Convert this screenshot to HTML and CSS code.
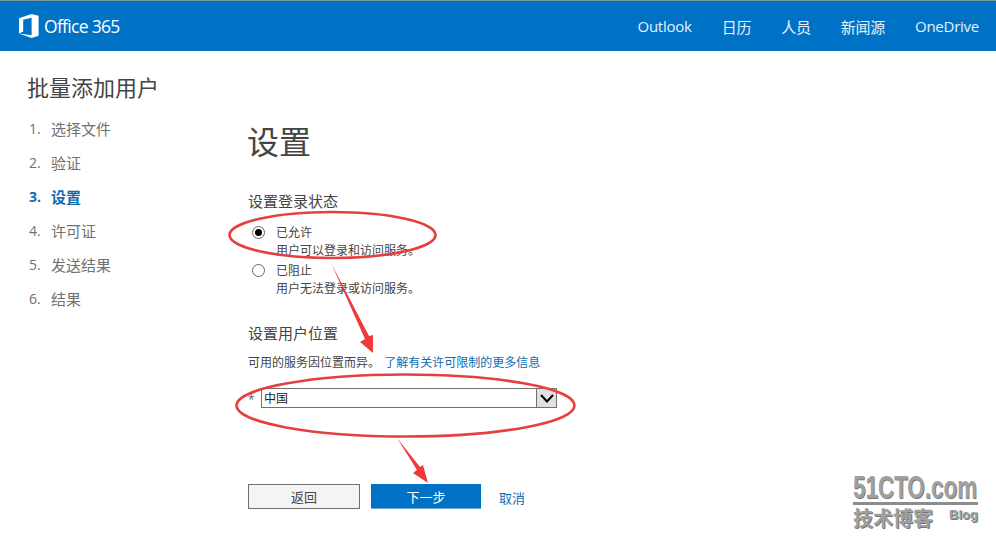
FILE: index.html
```html
<!DOCTYPE html>
<html lang="en">
<head>
  <meta charset="UTF-8">
  <title>批量添加用户</title>
  <link rel="stylesheet" href="styles.css">
</head>
<body>
  <div class="header">
    <div class="logo">
      <svg class="logo-icon" width="20" height="24" viewBox="0 0 20 24">
        <path fill="#fff" d="M0 4.2 12.6 0 19.6 1.8V21.8L12.6 24 0 19.6 12.6 21.2V3.8L4.2 5.8V17.6L0 19.6Z"/>
      </svg>
      <span class="logo-text">Office 365</span>
    </div>
    <div class="nav">
      <a>Outlook</a>
      <a>日历</a>
      <a>人员</a>
      <a>新闻源</a>
      <a>OneDrive</a>
    </div>
  </div>

  <div class="page">
    <div class="sidebar">
      <div class="page-title">批量添加用户</div>
      <ol class="steps">
        <li><span class="num">1.</span>选择文件</li>
        <li><span class="num">2.</span>验证</li>
        <li class="active"><span class="num">3.</span>设置</li>
        <li><span class="num">4.</span>许可证</li>
        <li><span class="num">5.</span>发送结果</li>
        <li><span class="num">6.</span>结果</li>
      </ol>
    </div>

    <div class="content">
      <h1>设置</h1>

      <div class="section-title">设置登录状态</div>
      <div class="radio-row">
        <span class="radio checked"></span>
        <div class="radio-text">
          <div>已允许</div>
          <div>用户可以登录和访问服务。</div>
        </div>
      </div>
      <div class="radio-row">
        <span class="radio"></span>
        <div class="radio-text">
          <div>已阻止</div>
          <div>用户无法登录或访问服务。</div>
        </div>
      </div>

      <div class="section-title location-title">设置用户位置</div>
      <div class="hint">可用的服务因位置而异。 <a class="link hint-link">了解有关许可限制的更多信息</a></div>

      <div class="select-row">
        <span class="star">*</span>
        <div class="select">
          <span class="select-value">中国</span>
          <span class="select-arrow">
            <svg width="14" height="9" viewBox="0 0 14 9"><path d="M1 1 7 7.5 13 1" fill="none" stroke="#000" stroke-width="2"/></svg>
          </span>
        </div>
      </div>

      <div class="buttons">
        <button class="btn">返回</button>
        <button class="btn primary">下一步</button>
        <a class="link cancel">取消</a>
      </div>
    </div>
  </div>

  <!-- red marks drawn on top of the screenshot -->
  <svg class="marks" width="996" height="546" viewBox="0 0 996 546">
    <ellipse cx="332.5" cy="235" rx="103" ry="23" fill="none" stroke="#e5403f" stroke-width="2.6"/>
    <ellipse cx="405.5" cy="405.5" rx="169" ry="31" fill="none" stroke="#e5403f" stroke-width="2.6"/>
    <path fill="#f0393a" d="M331 263 369 336 373 335 373 353 360 342 365 339Z"/>
    <path fill="#f0393a" d="M397 438 420 467 423 465 428 483 413 473 417 470Z"/>
  </svg>

  <div class="watermark">
    <div class="wm-site"><span class="wm-site-text">51CTO.com</span></div>
    <div class="wm-sub"><span class="wm-cn">技术博客</span><span class="wm-blog">Blog</span></div>
  </div>
</body>
</html>
```

FILE: styles.css
```css
body {
  margin: 0;
  width: 996px;
  height: 546px;
  overflow: hidden;
  position: relative;
  background-color: #fff;
  color: #444;
  font-family: "Open Sans", "Noto Sans CJK SC", sans-serif;
  font-size: 12px;
}

.header {
  height: 50px;
  border-top: 1px solid #7a9a9a;
  background-color: #0072c6;
  display: flex;
  justify-content: space-between;
  align-items: center;
  color: #fff;
}

.logo {
  display: flex;
  align-items: center;
  margin-left: 19px;
}

.logo-icon {
  margin-right: 5px;
}

.logo-text {
  font-size: 17.5px;
  letter-spacing: -0.7px;
}

.nav {
  display: flex;
  gap: 30px;
  margin-right: 17px;
  font-size: 15px;
  letter-spacing: -0.25px;
  color: #e3f1fb;
}

.page {
  display: flex;
}

.sidebar {
  width: 220px;
  padding-left: 28px;
  flex-shrink: 0;
}

.page-title {
  margin-top: 21px;
  margin-left: -1px;
  font-size: 22px;
  line-height: 30px;
  color: #444;
}

.steps {
  list-style: none;
  margin: 10px 0 0;
  padding: 0 0 0 1px;
  font-size: 15px;
  color: #707070;
}

.steps li {
  height: 34px;
  line-height: 34px;
  display: flex;
}

.num {
  width: 22px;
  font-size: 14px;
}

.steps .active {
  color: #0f6cb0;
  font-weight: 700;
}

.content {
  padding-top: 69px;
}

h1 {
  margin: 0 0 0 -1px;
  font-size: 32px;
  line-height: 44px;
  font-weight: 400;
  color: #444;
}

.section-title {
  margin-top: 27px;
  font-size: 15px;
  line-height: 20px;
}

.radio-row {
  display: flex;
  margin-top: 13px;
  padding-left: 4px;
}

.radio-row + .radio-row {
  margin-top: 2px;
}

.radio {
  width: 11px;
  height: 11px;
  margin-top: 2px;
  border: 1px solid #666;
  border-radius: 50%;
  position: relative;
}

.radio.checked::after {
  content: "";
  position: absolute;
  left: 2px;
  top: 2px;
  width: 7px;
  height: 7px;
  border-radius: 50%;
  background-color: #000;
}

.radio-text {
  margin-left: 11px;
  line-height: 18px;
}

.location-title {
  margin-top: 25px;
}

.hint {
  margin-top: 11px;
  line-height: 18px;
}

.link {
  color: #0f6cb0;
}

.hint-link {
  margin-left: 1px;
}

.select-row {
  display: flex;
  margin-top: 16px;
}

.star {
  width: 13px;
  padding-top: 4px;
  color: #666;
  line-height: 16px;
}

.select {
  width: 294px;
  height: 18px;
  border: 1px solid #707070;
  display: flex;
  justify-content: space-between;
  color: #222;
  line-height: 19px;
}

.select-value {
  padding-left: 2px;
}

.select-arrow {
  width: 19px;
  background-color: #e1e1e1;
  border-left: 1px solid #707070;
  display: flex;
  align-items: center;
  justify-content: center;
}

.buttons {
  display: flex;
  align-items: center;
  margin-top: 76px;
}

.btn {
  width: 112px;
  height: 25px;
  margin-right: 11px;
  padding: 0;
  border: 1px solid #707070;
  background-color: #f4f4f4;
  color: #444;
  font-family: inherit;
  font-size: 13px;
}

.btn.primary {
  width: 110px;
  margin-right: 18px;
  border: none;
  border-bottom: 1px solid #6fa6d0;
  background-color: #0072c6;
  color: #fff;
}

.cancel {
  font-size: 13px;
  margin-top: 2px;
}

.marks {
  position: absolute;
  left: 0;
  top: 0;
}

.watermark {
  position: absolute;
  left: 853px;
  top: 472px;
  width: 125px;
  color: #a0a0a0;
  font-family: "Liberation Sans", "Noto Sans CJK SC", sans-serif;
  font-weight: 700;
  text-shadow: 1px 1px 0 #777;
}

.wm-site {
  height: 30px;
  border-bottom: 3px solid #8c8c8c;
  white-space: nowrap;
}

.wm-site-text {
  display: inline-block;
  font-size: 32px;
  line-height: 30px;
  transform: scaleX(0.7);
  transform-origin: 0 0;
}

.wm-sub {
  display: flex;
  justify-content: space-between;
  margin-top: 3px;
}

.wm-cn {
  font-size: 20px;
  line-height: 22px;
}

.wm-blog {
  font-size: 13px;
  line-height: 14px;
}
```
